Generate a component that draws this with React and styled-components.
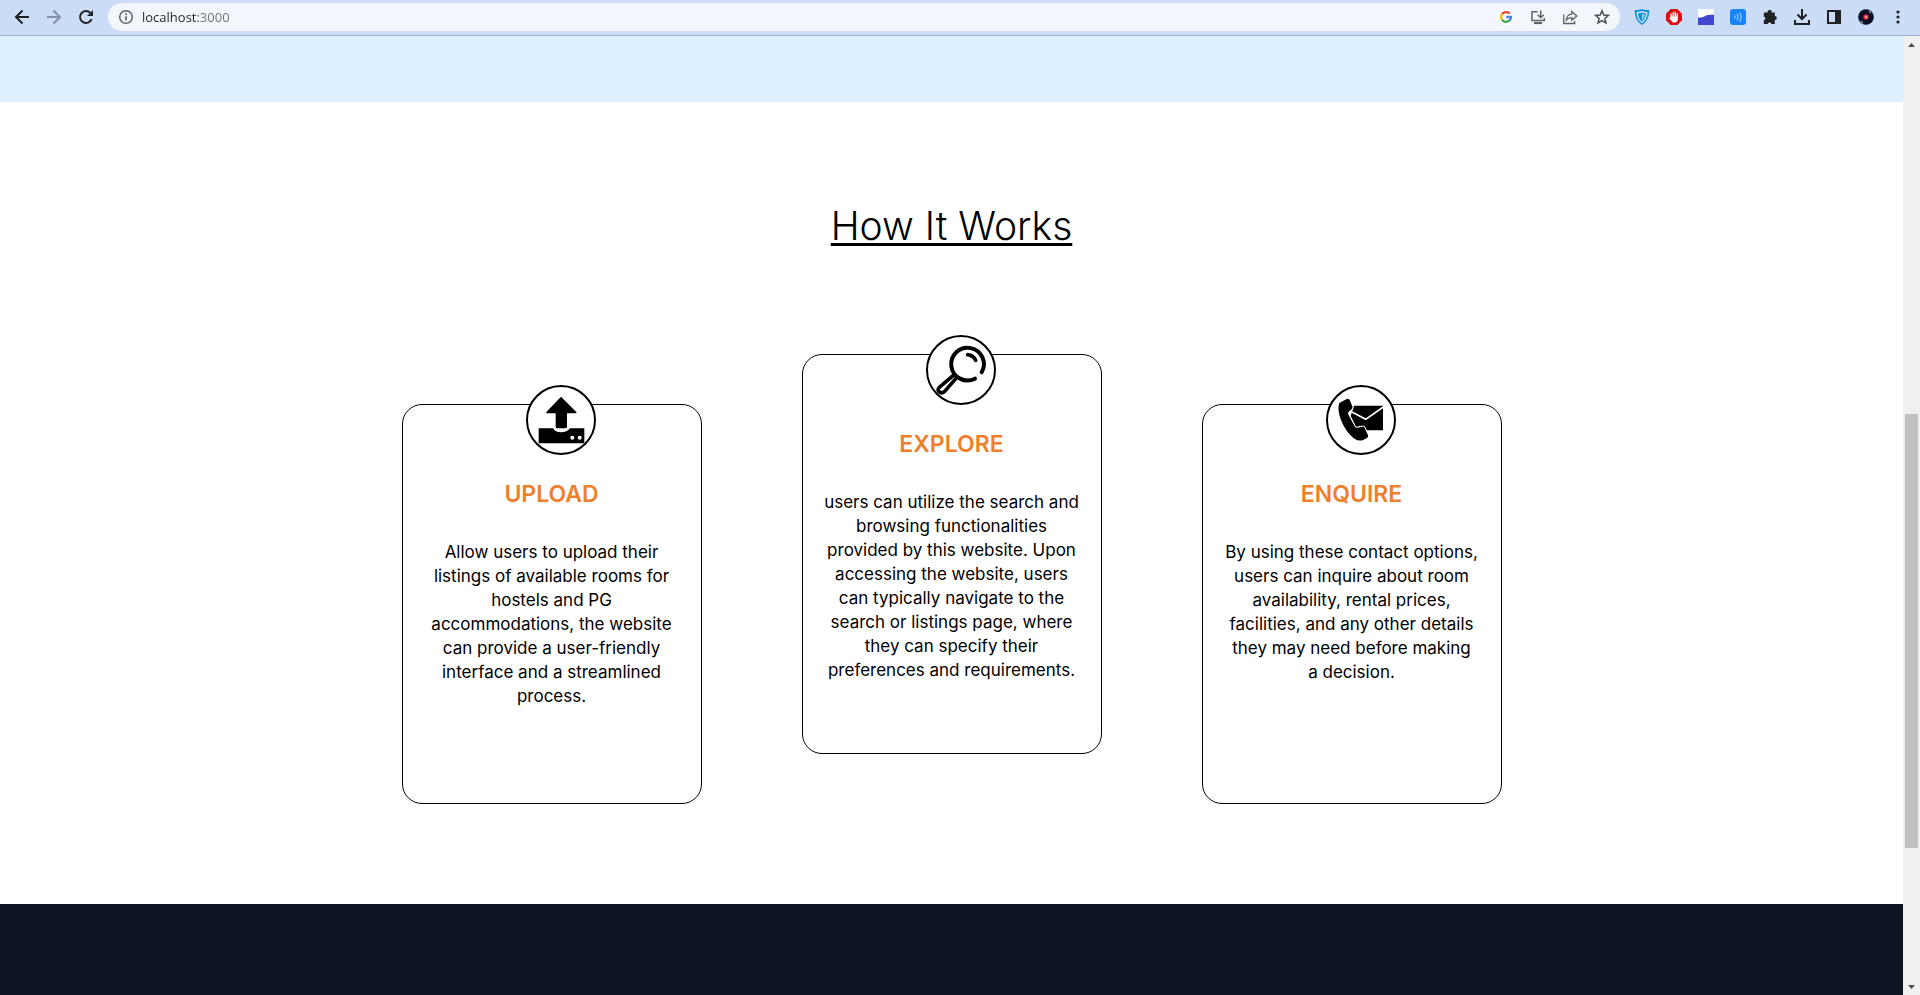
import React from "react";
import styled, { createGlobalStyle } from "styled-components";

const GlobalStyle = createGlobalStyle`
  * { box-sizing: border-box; }
  body {
    margin: 0;
    font-family: Inter, "Liberation Sans", sans-serif;
    color: #000;
    background: #fff;
  }
`;

const Browser = styled.div`
  display: grid;
  grid-template-rows: auto 1fr;
  height: 100vh;
  overflow: hidden;
`;

const Toolbar = styled.header`
  display: flex;
  align-items: flex-start;
  gap: 6px;
  height: 36px;
  padding: 3px 6px 0;
  background: #cbdcf7;
  border-bottom: 1px solid #9db2d6;
`;

const ButtonGroup = styled.nav`
  display: flex;
`;

const IconButton = styled.button`
  display: flex;
  align-items: center;
  justify-content: center;
  width: 32px;
  height: 28px;
  padding: 0;
  border: 0;
  background: none;
  color: ${(p) => p.$color || "#202124"};

  svg { display: block; }
`;

const AddressBar = styled.div`
  display: flex;
  flex: 1;
  align-items: center;
  height: 28px;
  padding: 0 2px;
  border-radius: 14px;
  background: #f3f7fd;
`;

const AddressInput = styled.input`
  flex: 1;
  min-width: 0;
  height: 20px;
  padding: 0;
  border: 0;
  outline: 0;
  font: 13px/20px "Open Sans", sans-serif;
  color: transparent;
  background: linear-gradient(to right, #202124 56px, #6b7075 56px);
  background-clip: text;
`;

const Viewport = styled.div`
  display: flex;
  min-height: 0;
`;

const Page = styled.div`
  display: flex;
  flex: 1;
  flex-direction: column;
  min-width: 0;
  overflow: hidden;
`;

const HeroEdge = styled.div`
  flex: none;
  height: 66px;
  background: #ddf0ff;
`;

const Section = styled.main`
  display: flex;
  flex: none;
  flex-direction: column;
  align-items: center;
  gap: 104px;
  padding: 100px 0;
`;

const SectionTitle = styled.h1`
  margin: 0;
  font-size: 39px;
  font-weight: 300;
  line-height: 48px;
  text-decoration: underline;
  text-decoration-thickness: 3px;
  text-underline-offset: 3px;
  text-decoration-skip-ink: none;
`;

const Cards = styled.div`
  display: flex;
  align-items: flex-start;
  gap: 100px;
`;

const Card = styled.article`
  position: relative;
  width: 300px;
  height: 400px;
  margin-top: ${(p) => (p.$raised ? 0 : 50)}px;
  padding: 69px 20px 20px;
  border: 1px solid #000;
  border-radius: 20px;
  text-align: center;
`;

const Badge = styled.div`
  position: absolute;
  top: -20px;
  left: 123px;
  width: 70px;
  height: 70px;
  border: 2px solid #000;
  border-radius: 50%;
  background: #fff;

  svg { display: block; width: 100%; height: 100%; }
`;

const CardTitle = styled.h2`
  margin: 0 0 26px;
  font-size: 23px;
  font-weight: 600;
  line-height: 40px;
  color: #ee7f2d;
`;

const CardText = styled.p`
  margin: 0;
  font-size: 17px;
  line-height: 24px;
`;

const Footer = styled.footer`
  flex: 1;
  background: #0d1320;
`;

const Scrollbar = styled.div`
  display: flex;
  flex: none;
  flex-direction: column;
  width: 17px;
  background: #f0f0f0;
`;

const ScrollArrow = styled.button`
  display: flex;
  align-items: center;
  justify-content: center;
  width: 17px;
  height: 17px;
  padding: 0;
  border: 0;
  background: none;
`;

const ScrollTrack = styled.div`
  display: grid;
  flex: 1;
  grid-template-rows: 361fr 434fr 130fr;
`;

const ScrollThumb = styled.div`
  grid-row: 2;
  margin: 0 2px;
  background: #c1c1c1;
`;

const Icon = ({ size = 16, children, ...rest }) => (
  <svg width={size} height={size} viewBox={`0 0 ${size} ${size}`} fill="none" stroke="currentColor" strokeWidth="2" aria-hidden="true" {...rest}>
    {children}
  </svg>
);

const BackIcon = () => (
  <Icon><path d="M15 8H2.5M8.5 1.5L2 8l6.500 6.500" /></Icon>
);
const ForwardIcon = () => (
  <Icon><path d="M1 8h12.500M7.500 1.500L14 8l-6.500 6.500" /></Icon>
);
const ReloadIcon = () => (
  <Icon>
    <path d="M13.600 10.200A6 6 0 1 1 12.400 3.900" />
    <path d="M15 1v6H9z" fill="currentColor" stroke="none" />
  </Icon>
);
const InfoIcon = () => (
  <Icon strokeWidth="1.500">
    <circle cx="8" cy="8" r="6.300" />
    <path d="M8 7.200v4.300M8 4.300v1.700" strokeWidth="1.700" />
  </Icon>
);
const GoogleIcon = () => (
  <Icon stroke="none">
    <circle cx="8" cy="8" r="8" fill="#fff" />
    <g fill="none" strokeWidth="2.300">
      <path d="M4 5.200A5 5 0 0 1 11.700 4.600" stroke="#ea4335" />
      <path d="M4 10.800A5 5 0 0 1 4 5.200" stroke="#fbbc05" />
      <path d="M11.300 11.700A5 5 0 0 1 4 10.800" stroke="#34a853" />
      <path d="M8.200 8H13A5 5 0 0 1 11.300 11.700" stroke="#4285f4" />
    </g>
  </Icon>
);
const InstallIcon = () => (
  <Icon strokeWidth="1.500">
    <path d="M7.500 2.700H2v8.800h12.300V9" />
    <path d="M10.700 1.500v7M7.700 5.800l3 3 3-3" />
    <path d="M4 14h8" strokeWidth="2.200" />
  </Icon>
);
const ShareIcon = () => (
  <Icon strokeWidth="1.300">
    <path d="M1.700 5.500v9h11v-2.500" />
    <path d="M4.200 11.200C4.500 7.500 6.500 5.500 9.800 5.200V2.500L14.800 7l-5 4.300V8.600C7.300 8.700 5.600 9.500 4.200 11.200z" />
  </Icon>
);
const StarIcon = () => (
  <Icon strokeWidth="1.500">
    <path d="M8 1.800l1.800 4.200 4.600.4-3.500 3 1.100 4.500L8 11.500l-4 2.400 1.100-4.500-3.500-3L6.200 6z" />
  </Icon>
);
const ShieldIcon = () => (
  <Icon stroke="none">
    <path d="M8 0c2.500 1 5 1 7.300 1C15.300 8 13 13 8 16 3 13 .7 8 .7 1 3 1 5.500 1 8 0z" fill="#1592d6" />
    <path d="M8 2c2 .8 3.700 1 5.500 1C13.300 8 11.500 12 8 14.200 4.500 12 2.700 8 2.500 3 4.300 3 6 2.800 8 2z" fill="#d5ecfb" />
    <path d="M8 3.500c1.400.6 2.600.8 4 .8C11.800 8 10.500 11 8 12.800 5.500 11 4.200 8 4 4.300c1.400 0 2.600-.2 4-.8z" fill="#1592d6" />
    <path d="M8 4.800c1 .4 2 .5 2.800.5C10.600 8 9.700 10 8 11.500z" fill="#8fcdf0" />
  </Icon>
);
const BlockIcon = () => (
  <Icon stroke="none">
    <path d="M4.700 0h6.600L16 4.700v6.600L11.300 16H4.700L0 11.300V4.700z" fill="#e30b12" />
    <path d="M5.200 8V5.200M7.200 8V3.600M9.200 8V3.400M11.100 8V4.700" stroke="#fff" strokeWidth="1.400" strokeLinecap="round" />
    <path d="M4.500 7.500h7.300v3.100c0 1.600-1.300 2.900-2.900 2.900H8c-1 0-1.800-.5-2.400-1.300L3.300 9.300q.5-1 1.200-.6z" fill="#fff" />
  </Icon>
);
const WaveIcon = () => (
  <Icon stroke="none">
    <path d="M0 0h16v16H0z" fill="#fff" />
    <path d="M0 8.500c3 .4 5.500-.4 8-2 2.500-1.300 5-.4 8-.8V16H0z" fill="#4048cf" />
  </Icon>
);
const SignalIcon = () => (
  <Icon stroke="none">
    <rect width="16" height="16" rx="3" fill="#1983fc" />
    <path d="M4.500 6.500q1 1.500 0 3M7 4.800q2 3.200 0 6.400M9.500 3.300q3.200 4.700 0 9.400" stroke="#9fceff" strokeWidth="1.100" fill="none" />
  </Icon>
);
const PuzzleIcon = () => (
  <Icon stroke="none">
    <path d="M2.500 3.500h3.200a2 2 0 1 1 3.900 0h3.200v3.400a2 2 0 1 1 0 4V15H9.400a1.900 1.900 0 0 0-3.700 0H1.800v-3.700a2 2 0 0 0 0-3.900V4.200c0-.4.300-.7.700-.7z" fill="currentColor" />
  </Icon>
);
const DownloadIcon = () => (
  <Icon><path d="M8 0v9.500M3.500 5.500L8 10l4.500-4.500M1 11v4h14v-4" /></Icon>
);
const PanelIcon = () => (
  <Icon>
    <rect x="2" y="2" width="12" height="12" />
    <path d="M9 1h6v14H9z" fill="currentColor" stroke="none" />
  </Icon>
);
const ProfileIcon = () => (
  <Icon size={18} stroke="none">
    <circle cx="9" cy="9" r="9" fill="#b9dcfb" />
    <circle cx="9" cy="9" r="7.800" fill="#0b0d20" />
    <path d="M12 3l2 2M4 13l2 2" stroke="#9aa0ac" strokeWidth="1.200" />
    <circle cx="9" cy="9" r="3" fill="#71204e" />
    <circle cx="9" cy="9" r="2.200" fill="#f8324f" />
    <circle cx="9" cy="9" r="1" fill="#ffc76b" />
  </Icon>
);
const MenuIcon = () => (
  <Icon stroke="none" fill="currentColor">
    <circle cx="8" cy="3" r="1.600" /><circle cx="8" cy="8" r="1.600" /><circle cx="8" cy="13" r="1.600" />
  </Icon>
);

const UploadArt = () => (
  <svg viewBox="54 51 198 198" aria-hidden="true">
    <path d="M153 80l46 46q2 4-3 4h-25v40q0 5-5 5h-24q-5 0-5-5v-40h-25q-5 0-3-4z" />
    <path d="M86 175h43q6 12 24 12t27-12h43v45H86z" />
    <circle cx="187" cy="203" r="6" fill="#fff" />
    <circle cx="209" cy="203" r="6" fill="#fff" />
  </svg>
);
const ExploreArt = () => (
  <svg viewBox="54 51 198 198" fill="none" stroke="#000" strokeWidth="12" strokeLinecap="round" strokeLinejoin="round" aria-hidden="true">
    <path d="M215 157A49 49 0 1 0 195 176" />
    <path d="M173 104q17 2 24 17" strokeWidth="11" />
    <path d="M130 166L88 202q-7 8-1 13 8 7 17-1L138 175" strokeWidth="11" />
  </svg>
);
const EnquireArt = () => (
  <svg viewBox="54 51 198 198" aria-hidden="true">
    <path d="M132 107h87v74h-57l-8-14-16 5-16-34z" />
    <path d="M126 126L167 148 220 111" fill="none" stroke="#fff" strokeWidth="5" />
    <path
      d="M88 99l22-12q6-2 9 3l8 19q2 5-2 9l-10 8q-2 4 1 10l18 33q4 6 9 4l14-3q5-1 7 4l10 22q2 5-3 8l-13 7q-12 3-25-5-26-20-40-56-12-31-5-51z"
      stroke="#fff" strokeWidth="6" paintOrder="stroke"
    />
  </svg>
);

const extensions = [
  ["VPN shield", ShieldIcon],
  ["Ad blocker", BlockIcon],
  ["Wave", WaveIcon],
  ["Signal", SignalIcon],
  ["Extensions", PuzzleIcon],
  ["Downloads", DownloadIcon],
  ["Side panel", PanelIcon],
  ["Profile", ProfileIcon],
  ["Menu", MenuIcon],
];

const steps = [
  {
    title: "UPLOAD",
    Art: UploadArt,
    text: "Allow users to upload their listings of available rooms for hostels and PG accommodations, the website can provide a user-friendly interface and a streamlined process.",
  },
  {
    title: "EXPLORE",
    Art: ExploreArt,
    raised: true,
    text: "users can utilize the search and browsing functionalities provided by this website. Upon accessing the website, users can typically navigate to the search or listings page, where they can specify their preferences and requirements.",
  },
  {
    title: "ENQUIRE",
    Art: EnquireArt,
    text: "By using these contact options, users can inquire about room availability, rental prices, facilities, and any other details they may need before making a\u00a0decision.",
  },
];

export default function App() {
  return (
    <Browser>
      <GlobalStyle />
      <Toolbar>
        <ButtonGroup aria-label="Navigation">
          <IconButton aria-label="Back"><BackIcon /></IconButton>
          <IconButton aria-label="Forward" $color="#8290a8"><ForwardIcon /></IconButton>
          <IconButton aria-label="Reload"><ReloadIcon /></IconButton>
        </ButtonGroup>
        <AddressBar>
          <IconButton aria-label="Site information" $color="#5f6368"><InfoIcon /></IconButton>
          <AddressInput aria-label="Address" defaultValue="localhost:3000" />
          <IconButton aria-label="Search with Google"><GoogleIcon /></IconButton>
          <IconButton aria-label="Install" $color="#5f6368"><InstallIcon /></IconButton>
          <IconButton aria-label="Share" $color="#5f6368"><ShareIcon /></IconButton>
          <IconButton aria-label="Bookmark" $color="#4b4f54"><StarIcon /></IconButton>
        </AddressBar>
        <ButtonGroup aria-label="Extensions">
          {extensions.map(([label, Glyph]) => (
            <IconButton key={label} aria-label={label}><Glyph /></IconButton>
          ))}
        </ButtonGroup>
      </Toolbar>
      <Viewport>
        <Page>
          <HeroEdge />
          <Section>
            <SectionTitle>How It Works</SectionTitle>
            <Cards>
              {steps.map(({ title, Art, raised, text }) => (
                <Card key={title} $raised={raised}>
                  <Badge><Art /></Badge>
                  <CardTitle>{title}</CardTitle>
                  <CardText>{text}</CardText>
                </Card>
              ))}
            </Cards>
          </Section>
          <Footer />
        </Page>
        <Scrollbar>
          <ScrollArrow aria-label="Scroll up">
            <svg width="7" height="4" viewBox="0 0 7 4"><path d="M0 4h7L3.500 0z" fill="#505050" /></svg>
          </ScrollArrow>
          <ScrollTrack><ScrollThumb /></ScrollTrack>
          <ScrollArrow aria-label="Scroll down">
            <svg width="7" height="4" viewBox="0 0 7 4"><path d="M0 0h7L3.500 4z" fill="#505050" /></svg>
          </ScrollArrow>
        </Scrollbar>
      </Viewport>
    </Browser>
  );
}
